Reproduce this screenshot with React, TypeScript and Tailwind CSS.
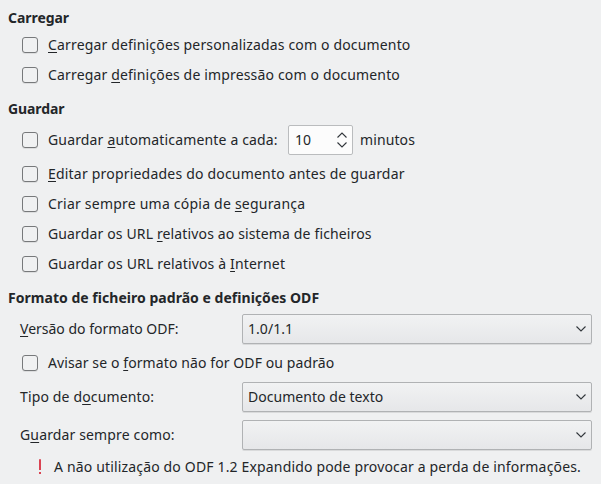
import React from "react";

/** Label text; the character between underscores is the keyboard mnemonic. */
function Label({ text, className = "" }: { text: string; className?: string }) {
  const [before, key, after] = text.split("_");
  return (
    <span className={`whitespace-pre ${className}`}>
      {before}
      {key && (
        <span className="underline decoration-1 underline-offset-2 [text-decoration-skip-ink:none]">
          {key}
        </span>
      )}
      {after}
    </span>
  );
}

function Heading({ children, className = "" }: { children: string; className?: string }) {
  return <h2 className={`flex h-6 items-center pl-2 font-bold ${className}`}>{children}</h2>;
}

interface CheckRowProps {
  text: string;
  tracking?: string;
  children?: React.ReactNode;
}

function CheckRow({ text, tracking = "tracking-[0.16px]", children }: CheckRowProps) {
  return (
    <div className="flex h-[30px] items-center pl-[22px]">
      <label className="flex items-center gap-2.5">
        <input
          type="checkbox"
          className="size-4 appearance-none rounded-[3px] border border-[#77797b] bg-[#f0f1f2] shadow-[0_1px_0_#dcddde]"
        />
        <Label text={text} className={tracking} />
      </label>
      {children}
    </div>
  );
}

function Chevron({ up = false }: { up?: boolean }) {
  return (
    <svg
      width="10"
      height="6"
      viewBox="0 0 10 6"
      fill="none"
      stroke="#31363b"
      strokeWidth="1.1"
      className={up ? "rotate-180" : ""}
    >
      <path d="M0.5 0.5 5 5 9.5 0.5" />
    </svg>
  );
}

interface SelectRowProps {
  text: string;
  value: string;
  tracking?: string;
}

function SelectRow({ text, value, tracking = "tracking-[0.14px]" }: SelectRowProps) {
  return (
    <div className="flex h-[30px] items-center pl-5">
      <div className="w-[222px]">
        <Label text={text} className={tracking} />
      </div>
      <button className="flex h-[30px] w-[350px] items-center justify-between rounded-[2px] border border-[#b0b2b4] bg-linear-to-b from-[#f1f2f3] to-[#e6e7e9] pr-[5px] pl-[5px] shadow-[0_1px_0_#d9dadb]">
        <span className="tracking-[0.04px]">{value}</span>
        <Chevron />
      </button>
    </div>
  );
}

export default function App() {
  return (
    <main className="h-[484px] w-[601px] overflow-hidden bg-[#eff0f1] pt-1.5 font-['Noto_Sans',sans-serif] text-[14px] leading-[18px] text-[#232629]">
      <Heading className="tracking-[-0.05px]">Carregar</Heading>
      <CheckRow text="_C_arregar definições personalizadas com o documento" />
      <CheckRow text="Carregar _d_efinições de impressão com o documento" />

      <div className="mt-[7px] mb-1">
        <Heading className="tracking-[-0.1px]">Guardar</Heading>
      </div>
      <CheckRow text="Guardar _a_utomaticamente a cada:">
        <div className="ml-auto flex w-[313px] items-center gap-[7px]">
          <div className="flex h-[30px] w-[65px] items-center justify-between rounded-[2px] border border-[#babcbe] bg-[#fcfcfc] pr-[5px] pl-1.5">
            <span>10</span>
            <div className="flex flex-col gap-1">
              <Chevron up />
              <Chevron />
            </div>
          </div>
          <span className="tracking-[0.1px]">minutos</span>
        </div>
      </CheckRow>
      <div className="mt-1">
        <CheckRow
          text="_E_ditar propriedades do documento antes de guardar"
          tracking="tracking-[0.2px]"
        />
        <CheckRow text="Criar sempre uma cópia de _s_egurança" tracking="tracking-[0.22px]" />
        <CheckRow
          text="Guardar os URL _r_elativos ao sistema de ficheiros"
          tracking="tracking-[0.14px]"
        />
        <CheckRow text="Guardar os URL relativos à _I_nternet" />
      </div>

      <div className="mt-[7px] mb-1">
        <Heading className="tracking-[0.03px]">Formato de ficheiro padrão e definições ODF</Heading>
      </div>
      <div className="flex flex-col gap-1">
        <SelectRow text="_V_ersão do formato ODF:" value="1.0/1.1" tracking="tracking-normal" />
        <CheckRow
          text="Avisar se o _f_ormato não for ODF ou padrão"
          tracking="tracking-[0.1px]"
        />
        <SelectRow text="Tipo de d_o_cumento:" value="Documento de texto" />
      </div>
      <div className="mt-2">
        <SelectRow text="G_u_ardar sempre como:" value="" />
      </div>
      <div className="mt-0.5 flex h-[30px] items-center gap-[13px] pl-[39px]">
        <svg width="2" height="16" viewBox="0 0 2 16" fill="#da4453">
          <path d="M0 .3h2V11H0zM0 13h2v2H0z" />
        </svg>
        <span className="tracking-[0.16px]">
          A não utilização do ODF 1.2 Expandido pode provocar a perda de informações.
        </span>
      </div>
    </main>
  );
}
